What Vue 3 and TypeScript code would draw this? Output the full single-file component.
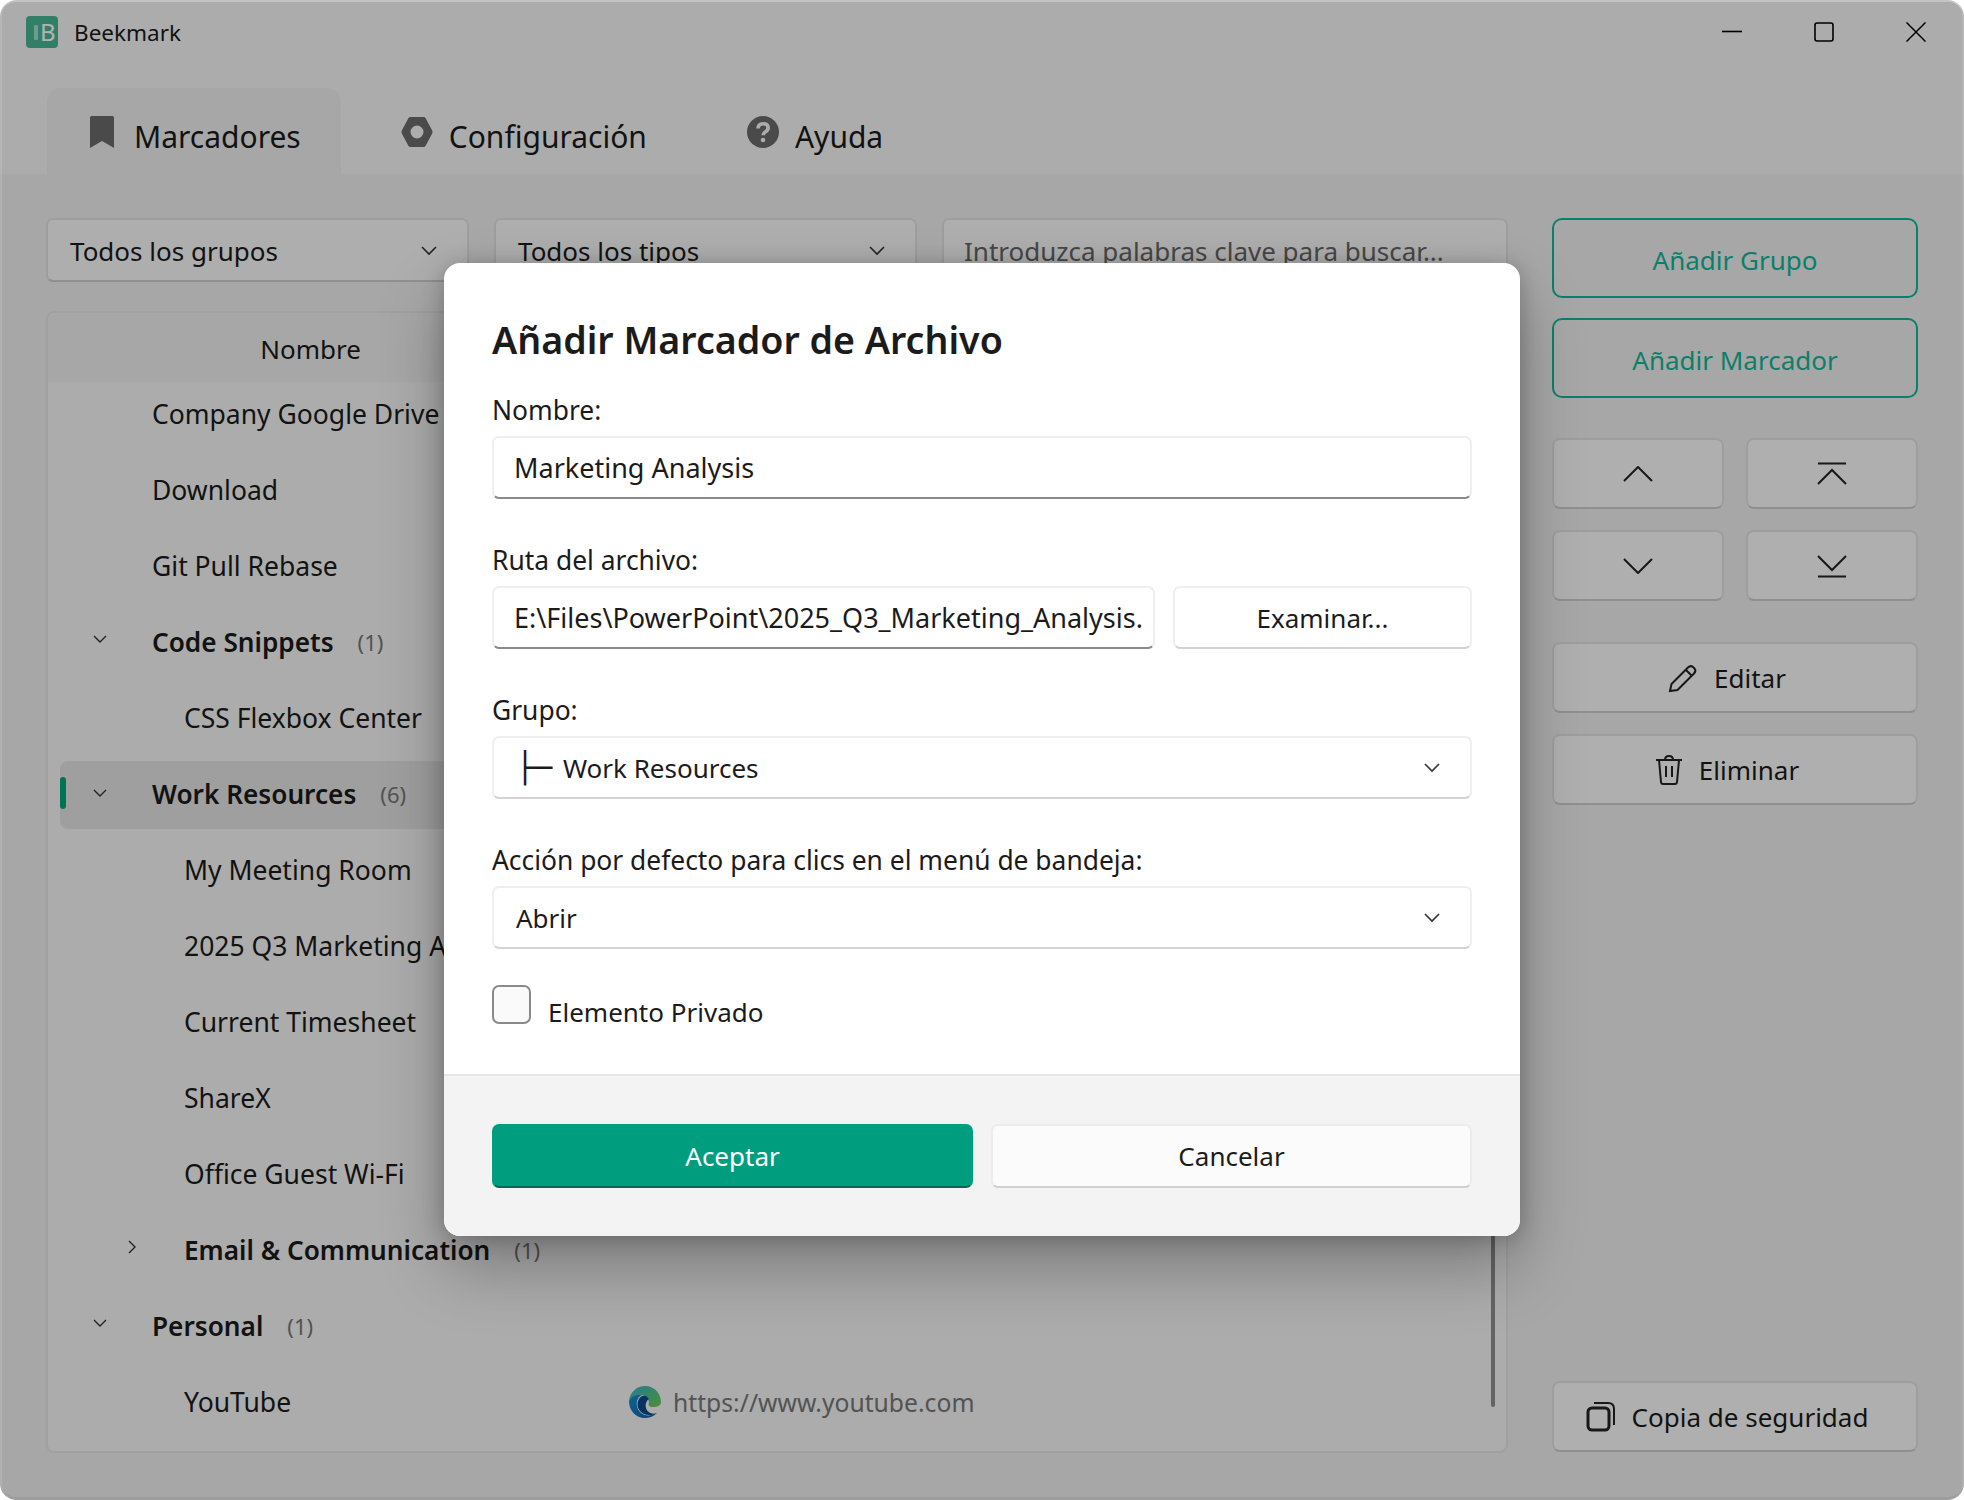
<script setup lang="ts">
interface TreeRow {
  name: string
  level: number
  group?: boolean
  count?: number
  open?: boolean
  selected?: boolean
  url?: string
}

const rows: TreeRow[] = [
  { name: 'Company Google Drive', level: 1 },
  { name: 'Download', level: 1 },
  { name: 'Git Pull Rebase', level: 1 },
  { name: 'Code Snippets', level: 1, group: true, count: 1, open: true },
  { name: 'CSS Flexbox Center', level: 2 },
  { name: 'Work Resources', level: 1, group: true, count: 6, open: true, selected: true },
  { name: 'My Meeting Room', level: 2 },
  { name: '2025 Q3 Marketing Analysis', level: 2 },
  { name: 'Current Timesheet', level: 2 },
  { name: 'ShareX', level: 2 },
  { name: 'Office Guest Wi-Fi', level: 2 },
  { name: 'Email & Communication', level: 2, group: true, count: 1 },
  { name: 'Personal', level: 1, group: true, count: 1, open: true },
  { name: 'YouTube', level: 2, url: 'https://www.youtube.com' }
]
</script>

<template>
  <div class="desktop">
    <div class="window">
      <header class="head">
        <div class="titlebar">
          <div class="logo"><span class="logo-stripe"></span><span class="logo-b">B</span></div>
          <span class="app-name">Beekmark</span>
          <div class="win-ctrls">
            <svg viewBox="0 0 20 20" width="20" height="20"><path d="M0 9.500h20" stroke="#000" stroke-width="1.600" /></svg>
            <svg viewBox="0 0 20 20" width="20" height="20"><rect x="1" y="1" width="18" height="18" rx="2" fill="none" stroke="#000" stroke-width="1.600" /></svg>
            <svg viewBox="0 0 20 20" width="20" height="20"><path d="M0.500 0.500l19 19M19.500 0.500l-19 19" stroke="#000" stroke-width="1.500" /></svg>
          </div>
        </div>
        <nav class="tabs">
          <div class="tab tab--active">
            <svg class="tab-icon tab-icon--mark" viewBox="0 0 24 32" width="24" height="32"><path d="M0 1.500q0-1.500 1.500-1.500h21q1.500 0 1.500 1.500v30.500l-12-7-12 7z" fill="#6a6a6a" /></svg>
            <span>Marcadores</span>
          </div>
          <div class="tab">
            <svg class="tab-icon" viewBox="0 0 32 30" width="32" height="30"><path fill-rule="evenodd" d="M9.500 0h13q1.400 0 2.100 1.200l6.600 12.300q.7 1.500 0 3l-6.600 12.300q-.7 1.200-2.100 1.200h-13q-1.400 0-2.100-1.200l-6.600-12.300q-.7-1.500 0-3l6.600-12.300q.7-1.200 2.100-1.200zM16 8.500a6.500 6.500 0 1 0 0 13 6.500 6.500 0 0 0 0-13z" fill="#6a6a6a" /></svg>
            <span>Configuración</span>
          </div>
          <div class="tab">
            <svg class="tab-icon" viewBox="0 0 32 32" width="32" height="32"><circle cx="16" cy="16" r="16" fill="#6a6a6a" /><path d="M11 12.500q.3-4.700 5.200-4.700 4.900 0 4.900 4 0 2.500-2.600 4-2.200 1.300-2.200 3.500" fill="none" stroke="#f7f7f7" stroke-width="3.600" /><circle cx="16" cy="24" r="2.300" fill="#f7f7f7" /></svg>
            <span>Ayuda</span>
          </div>
        </nav>
      </header>

      <main class="content">
        <section class="left">
          <div class="filters">
            <div class="select">
              <span>Todos los grupos</span>
              <svg class="chev" viewBox="0 0 16 10" width="16" height="10"><path d="M1 1l7 7 7-7" /></svg>
            </div>
            <div class="select">
              <span>Todos los tipos</span>
              <svg class="chev" viewBox="0 0 16 10" width="16" height="10"><path d="M1 1l7 7 7-7" /></svg>
            </div>
            <div class="search">Introduzca palabras clave para buscar...</div>
          </div>
          <div class="table">
            <div class="table-head"><div class="th-name">Nombre</div></div>
            <div class="table-body">
              <div
                v-for="row in rows"
                :key="row.name"
                :class="['row', `row--l${row.level}`, { 'row--group': row.group, 'row--selected': row.selected }]"
              >
                <span v-if="row.selected" class="row-mark"></span>
                <svg v-if="row.group && row.open" class="row-chev" viewBox="0 0 14 8" width="14" height="8"><path d="M1 1l6 6 6-6" /></svg>
                <svg v-else-if="row.group" class="row-chev row-chev--right" viewBox="0 0 8 14" width="8" height="14"><path d="M1 1l6 6-6 6" /></svg>
                <span class="row-name">{{ row.name }}</span>
                <span v-if="row.count" class="row-count">({{ row.count }})</span>
                <span v-if="row.url" class="row-url">
                  <svg viewBox="0 0 32 32" width="32" height="32">
                    <defs>
                      <linearGradient id="edgeA" x1="0" y1="0" x2="1" y2="1"><stop offset="0" stop-color="#2fb6cf" /><stop offset="1" stop-color="#6fce4e" /></linearGradient>
                      <linearGradient id="edgeB" x1="0" y1="0" x2="1" y2="1"><stop offset="0" stop-color="#1a8fd0" /><stop offset="1" stop-color="#0e5da8" /></linearGradient>
                    </defs>
                    <path d="M0 15C1 6 8 0 16 0c10 0 16 8 16 16 0 4-4 5-8 5-4 0-5-2-4-4 0-5-5-9-10-8C5 10 1 12 0 15z" fill="url(#edgeA)" />
                    <path d="M0 15c2-5 8-7 13-6-4 2-6 6-5 11 1 7 9 12 17 8l3-1c-4 4-8 5-12 5C7 32 0 25 0 15z" fill="url(#edgeB)" />
                    <path d="M13 10c-5 3-6 10-2 15 4 5 12 5 17 2-5 2-10-1-11-5-1-3 0-7 3-9-2-3-4-4-7-3z" fill="#0a4a8c" />
                  </svg>
                  <span>{{ row.url }}</span>
                </span>
              </div>
            </div>
            <div class="scrollbar"></div>
          </div>
        </section>

        <aside class="side">
          <button class="btn btn--accent">Añadir Grupo</button>
          <button class="btn btn--accent btn--second">Añadir Marcador</button>
          <div class="move-grid">
            <button class="btn btn--move">
              <svg viewBox="0 0 30 16" width="30" height="16"><path d="M1 15L15 1l14 14" /></svg>
            </button>
            <button class="btn btn--move">
              <svg viewBox="0 0 30 24" width="30" height="24"><path d="M1 1.500h28" /><path d="M1 22L15 8l14 14" /></svg>
            </button>
            <button class="btn btn--move">
              <svg viewBox="0 0 30 16" width="30" height="16"><path d="M1 1l14 14L29 1" /></svg>
            </button>
            <button class="btn btn--move">
              <svg viewBox="0 0 30 24" width="30" height="24"><path d="M1 2l14 14L29 2" /><path d="M1 22.500h28" /></svg>
            </button>
          </div>
          <button class="btn btn--plain btn--edit">
            <svg viewBox="0 0 30 30" width="30" height="30"><path d="M2 28l1.500-7L20 4.500q2.500-2.500 5-.5l1.500 1.500q2 2.500-.5 5L9.500 27zM18 7l6 6" /></svg>
            <span>Editar</span>
          </button>
          <button class="btn btn--plain btn--del">
            <svg viewBox="0 0 28 30" width="28" height="30"><path d="M1 5h26M10 5q0-4 4-4t4 4M4 5l2 22q.2 2 2 2h12q1.800 0 2-2l2-22M11 11v11M17 11v11" /></svg>
            <span>Eliminar</span>
          </button>
          <div class="side-space"></div>
          <button class="btn btn--plain btn--backup">
            <svg viewBox="0 0 30 30" width="30" height="30"><path d="M8 1h14q6 0 6 6v16" /><rect x="2" y="6" width="21" height="22" rx="4" stroke-width="3" /></svg>
            <span>Copia de seguridad</span>
          </button>
        </aside>
      </main>

      <div class="overlay">
        <div class="dialog">
          <div class="dialog-body">
            <h2 class="dialog-title">Añadir Marcador de Archivo</h2>
            <label class="field-label">Nombre:</label>
            <div class="field field--input">Marketing Analysis</div>
            <label class="field-label field-label--gap">Ruta del archivo:</label>
            <div class="path-row">
              <div class="field field--input field--path">E:\Files\PowerPoint\2025_Q3_Marketing_Analysis.</div>
              <button class="field field--btn">Examinar...</button>
            </div>
            <label class="field-label field-label--gap">Grupo:</label>
            <div class="field field--select">
              <span><span class="tree-glyph">├─</span> Work Resources</span>
              <svg class="chev" viewBox="0 0 16 10" width="16" height="10"><path d="M1 1l7 7 7-7" /></svg>
            </div>
            <label class="field-label field-label--gap">Acción por defecto para clics en el menú de bandeja:</label>
            <div class="field field--select">
              <span>Abrir</span>
              <svg class="chev" viewBox="0 0 16 10" width="16" height="10"><path d="M1 1l7 7 7-7" /></svg>
            </div>
            <div class="check-row">
              <span class="check-box"></span>
              <span class="check-label">Elemento Privado</span>
            </div>
          </div>
          <div class="dialog-foot">
            <button class="foot-btn foot-btn--ok">Aceptar</button>
            <button class="foot-btn">Cancelar</button>
          </div>
        </div>
      </div>
    </div>
  </div>
</template>

<style>
html, body { margin: 0; background: #fff; }
</style>

<style scoped>
.desktop {
  width: 1964px;
  height: 1500px;
  background: #fff;
  font-family: "Noto Sans", "Open Sans", sans-serif;
  color: #1b1b1b;
}
.window {
  position: relative;
  width: 100%;
  height: 100%;
  box-sizing: border-box;
  border-radius: 16px;
  overflow: hidden;
  display: flex;
  flex-direction: column;
  background: #f0f0f0;
}

/* header */
.head { background: #f7f7f7; height: 174px; flex: none; display: flex; flex-direction: column; }
.titlebar { height: 88px; display: flex; align-items: flex-start; padding: 16px 38px 0 26px; box-sizing: border-box; }
.logo {
  width: 32px;
  height: 32px;
  border-radius: 4px;
  background: #45b793;
  color: #fff;
  font-size: 24px;
  line-height: 32px;
  display: flex;
  align-items: center;
  padding-left: 8px;
  box-sizing: border-box;
  overflow: hidden;
}
.logo-stripe { width: 4px; height: 15px; margin-right: 2px; background: #fff; opacity: .5; border-radius: 1px; }
.app-name { margin-left: 16px; font-size: 22.500px; line-height: 34px; }
.win-ctrls { margin-left: auto; display: flex; gap: 72px; padding-top: 6px; }
.tabs { flex: 1; display: flex; gap: 17px; padding-left: 47px; }
.tab { display: flex; align-items: center; padding: 10px 40px 0 43px; font-size: 30px; height: 86px; box-sizing: border-box; border-radius: 14px 14px 0 0; }
.tab--active { background: #f0f0f0; }
.tab-icon { margin-right: 16px; margin-top: -9px; }
.tab-icon--mark { margin-right: 20px; }

/* main area */
.content { flex: 1; display: flex; padding: 44px 46px 47px; gap: 44px; min-height: 0; }
.left { width: 1462px; display: flex; flex-direction: column; }
.filters { display: flex; gap: 25px; height: 64px; flex: none; }
.select, .search {
  box-sizing: border-box;
  height: 64px;
  border: 2px solid #e3e3e3;
  border-bottom-color: #cfcfcf;
  border-radius: 7px;
  background: #f9f9f9;
  font-size: 26px;
  display: flex;
  align-items: center;
  padding-top: 2px;
}
.select { width: 423px; padding-left: 22px; padding-right: 30px; justify-content: space-between; }
.search { flex: 1; padding-left: 20px; padding-right: 20px; color: #666; }
.chev { fill: none; stroke: #333; stroke-width: 1.600; }

.table {
  position: relative;
  margin-top: 29px;
  flex: 1;
  border: 2px solid #e6e6e6;
  border-radius: 8px;
  background: #f6f6f6;
  overflow: hidden;
  min-height: 0;
}
.table-head { height: 69px; background: #f0f0f0; position: relative; z-index: 1; }
.th-name { width: 525px; line-height: 73px; text-align: center; font-size: 26px; }
.table-body { margin-top: -5px; }
.row {
  position: relative;
  height: 76px;
  display: flex;
  align-items: center;
  font-size: 26.500px;
  padding-bottom: 2px;
  box-sizing: border-box;
}
.row--l1 { padding-left: 104px; }
.row--l2 { padding-left: 136px; }
.row--group { font-weight: 600; font-size: 26.200px; }
.row--selected { background: #e4e4e4; border-radius: 8px; margin: 4px 0 4px 12px; height: 68px; padding-left: 92px; }
.row-mark { position: absolute; left: 0; top: 16px; width: 6px; height: 32px; border-radius: 3px; background: #00a87c; }
.row-chev { position: absolute; left: 45px; top: 30px; fill: none; stroke: #333; stroke-width: 1.400; }
.row--selected .row-chev { left: 33px; top: 28px; }
.row-chev--right { left: 80px; top: 27px; }
.row-count { margin-left: 24px; font-size: 22px; font-weight: 400; color: #777; }
.row-url { position: absolute; left: 581px; display: flex; align-items: center; gap: 12px; color: #777; font-size: 24.700px; }
.scrollbar { position: absolute; right: 11px; top: 100px; bottom: 44px; width: 4px; border-radius: 2px; background: #909090; z-index: 1; }

/* side buttons */
.side { flex: 1; display: flex; flex-direction: column; }
.btn {
  font: inherit;
  font-size: 26px;
  color: #1b1b1b;
  box-sizing: border-box;
  background: #fbfbfb;
  border: 2px solid #e3e3e3;
  border-bottom-color: #cdcdcd;
  border-radius: 8px;
  padding: 0;
  display: flex;
  align-items: center;
  justify-content: center;
  flex: none;
}
.btn--accent { height: 80px; padding-top: 4px; background: transparent; border: 2.500px solid #11b799; border-radius: 10px; color: #11b799; }
.btn--second { margin-top: 20px; }
.move-grid { display: grid; grid-template-columns: 1fr 1fr; gap: 21px 22px; margin-top: 40px; }
.btn--move { height: 71px; }
.btn--move svg { fill: none; stroke: #222; stroke-width: 2; }
.btn--plain svg { fill: none; stroke: #222; stroke-width: 2; }
.btn--plain { height: 71px; gap: 16px; padding-right: 16px; }
.btn--edit { margin-top: 41px; }
.btn--del { margin-top: 21px; }
.side-space { flex: 1; }
.btn--backup { margin-bottom: 1px; }

/* dialog */
.overlay {
  position: absolute;
  inset: 0;
  z-index: 5;
  border-radius: 16px;
  background: rgba(0, 0, 0, .3);
  box-shadow: inset 0 2px 0 rgba(255, 255, 255, .28), inset 2px 0 0 rgba(255, 255, 255, .12), inset -2px 0 0 rgba(255, 255, 255, .12), inset 0 -3px 0 rgba(0, 0, 0, .06);
  display: flex;
  align-items: center;
  justify-content: center;
}
.dialog {
  width: 1076px;
  height: 973px;
  margin-top: -1px;
  border-radius: 16px;
  overflow: hidden;
  background: #fff;
  display: flex;
  flex-direction: column;
  box-shadow: 0 32px 64px rgba(0, 0, 0, .28), 0 2px 21px rgba(0, 0, 0, .22);
}
.dialog-body { flex: 1; padding: 53px 48px 0; display: flex; flex-direction: column; }
.dialog-title { margin: 0; font-size: 37.600px; line-height: 48px; font-weight: 600; color: #1b1b1b; }
.field-label { font-size: 26.400px; line-height: 36px; margin-top: 28px; margin-bottom: 8px; }
.field-label--gap { margin-top: 43px; }
.field {
  box-sizing: border-box;
  height: 63px;
  border: 2px solid #efefef;
  border-bottom-color: #d3d3d3;
  border-radius: 7px;
  font-size: 26px;
  display: flex;
  align-items: center;
  background: #fff;
  flex: none;
}
.field--input { padding: 0 20px; border-bottom-color: #8a8a8a; font-size: 27px; }
.path-row { display: flex; gap: 18px; }
.field--path { width: 663px; white-space: nowrap; overflow: hidden; }
.field--btn { flex: 1; justify-content: center; font: inherit; font-size: 26px; color: inherit; }
.field--select { padding: 0 30px 0 22px; justify-content: space-between; }
.tree-glyph { font-family: "DejaVu Sans", sans-serif; font-size: 30px; margin-right: 4px; line-height: 30px; }
.check-row { display: flex; margin-top: 36px; }
.check-box { box-sizing: border-box; width: 39px; height: 39px; border: 2px solid #8a8a8a; border-radius: 7px; background: #fafafa; }
.check-label { margin-left: 17px; font-size: 26px; line-height: 36px; margin-top: 9px; }
.dialog-foot {
  height: 162px;
  flex: none;
  box-sizing: border-box;
  background: #f3f3f3;
  border-top: 2px solid #e6e6e6;
  padding: 48px 48px 0;
  display: flex;
  gap: 18px;
}
.foot-btn {
  flex: 1;
  height: 64px;
  font: inherit;
  font-size: 26px;
  color: #1b1b1b;
  background: #fbfbfb;
  border: 2px solid #ececec;
  border-bottom-color: #cfcfcf;
  border-radius: 7px;
}
.foot-btn--ok { background: #009e7e; color: #fff; border-color: #009e7e; border-bottom-color: #006a55; }
</style>
